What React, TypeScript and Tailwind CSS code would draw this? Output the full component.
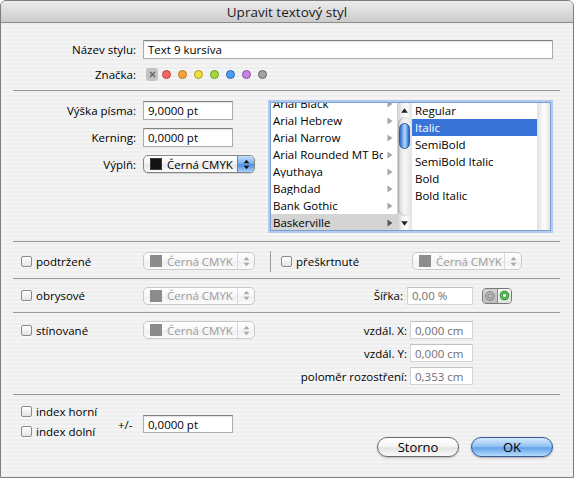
import React from "react";

const Sep = () => <div className="h-px bg-[#9a9a9a]" />;

function Check({ label }: { label: string }) {
  return (
    <div className="flex items-center">
      <div className="w-[11px] h-[11px] shrink-0 rounded-[2px] border border-[#8a8a8a] bg-[linear-gradient(180deg,#ffffff,#e4e4e4)] shadow-[0_1px_0_rgba(255,255,255,0.8)]" />
      <span className="ml-[4px] text-[11.5px] leading-[13px] whitespace-nowrap">{label}</span>
    </div>
  );
}

function Field({ value, className, disabled }: { value: string; className: string; disabled?: boolean }) {
  return (
    <div
      className={
        "flex items-center bg-white border pl-[4px] text-[11.5px] leading-[13px] whitespace-nowrap overflow-hidden " +
        (disabled
          ? "border-[#d4d4d4] border-t-[#c2c2c2] text-[#6f6f6f] "
          : "border-[#ababab] border-t-[#828282] text-black shadow-[inset_0_1px_1px_rgba(0,0,0,0.12)] ") +
        className
      }
    >
      {value}
    </div>
  );
}

function UpDown({ color }: { color: string }) {
  return (
    <svg width="7" height="11" viewBox="0 0 7 11">
      <path d="M3.5 0.8 L6.3 4.2 H0.7Z" fill={color} />
      <path d="M0.7 6.8 H6.3 L3.5 10.2Z" fill={color} />
    </svg>
  );
}

function PopupOn() {
  return (
    <div className="flex h-[18px] w-[112px] rounded-[5px] border border-[#858585] overflow-hidden bg-[linear-gradient(180deg,#ffffff_0%,#f3f3f3_50%,#e6e6e6_55%,#fbfbfb_100%)] shadow-[0_1px_1px_rgba(0,0,0,0.15)]">
      <div className="flex flex-1 items-center pl-[6px] overflow-hidden">
        <div className="w-[12px] h-[12px] shrink-0 bg-[#141414] border border-[#3a3a3a]" />
        <span className="ml-[5px] text-[11.5px] leading-[13px] whitespace-nowrap">Černá CMYK</span>
      </div>
      <div className="w-[17px] shrink-0 flex items-center justify-center border-l border-[#5b86c6] bg-[linear-gradient(180deg,#c6defa_0%,#7fb2f0_45%,#4d8fe4_55%,#a8d0fb_100%)]">
        <UpDown color="#111" />
      </div>
    </div>
  );
}

function PopupOff({ className }: { className: string }) {
  return (
    <div className={"flex h-[18px] rounded-[5px] border border-[#c9c9c9] overflow-hidden bg-[linear-gradient(180deg,#ffffff_0%,#f7f7f7_50%,#efefef_55%,#fcfcfc_100%)] " + className}>
      <div className="flex flex-1 items-center pl-[6px] overflow-hidden">
        <div className="w-[12px] h-[12px] shrink-0 bg-[#8c8c8c]" />
        <span className="ml-[5px] text-[11.5px] leading-[13px] whitespace-nowrap text-[#9c9c9c]">Černá CMYK</span>
      </div>
      <div className="w-[17px] shrink-0 flex items-center justify-center border-l border-[#dadada]">
        <UpDown color="#a8a8a8" />
      </div>
    </div>
  );
}

function Arrow({ dark }: { dark?: boolean }) {
  return (
    <svg width="6" height="8" viewBox="0 0 6 8">
      <path d="M0.5 0.5 L5.5 4 L0.5 7.5Z" fill={dark ? "#555555" : "#a6a6a6"} />
    </svg>
  );
}

const families = [
  "Arial Black",
  "Arial Hebrew",
  "Arial Narrow",
  "Arial Rounded MT Bold",
  "Ayuthaya",
  "Baghdad",
  "Bank Gothic",
  "Baskerville",
];
const styles = ["Regular", "Italic", "SemiBold", "SemiBold Italic", "Bold", "Bold Italic"];

const dots = [
  ["bg-[#f4665f]", "border-[#b8443e]"],
  ["bg-[#f7a53a]", "border-[#b87a22]"],
  ["bg-[#eedf3c]", "border-[#a89a1e]"],
  ["bg-[#a5d63c]", "border-[#6d9e20]"],
  ["bg-[#4c9cf4]", "border-[#2b66bc]"],
  ["bg-[#c585e4]", "border-[#8852a6]"],
  ["bg-[#a3a3a3]", "border-[#666666]"],
];

function FontBrowser() {
  return (
    <div className="mt-[11px] flex h-[129px] w-[281px] border border-[#7c9fd3] shadow-[0_0_0_2px_#b0cbef]">
      <div className="w-[126px] overflow-hidden bg-white">
        <div className="mt-[-8px]">
          {families.map((f, i) => (
            <div
              key={f}
              className={"flex h-[17px] items-center " + (i === 7 ? "bg-[#d4d4d4]" : "")}
            >
              <span className="w-[112px] pl-[2px] overflow-hidden whitespace-nowrap text-[11.5px] leading-[13px]">{f}</span>
              <span className="ml-[4px] flex items-center">
                <Arrow dark={i === 7} />
              </span>
            </div>
          ))}
        </div>
      </div>
      <div className="w-[15px] flex flex-col bg-[linear-gradient(90deg,#cdcdcd,#f2f2f2_35%,#fdfdfd_60%,#e2e2e2)]">
        <div className="h-[14px] flex items-center justify-center">
          <svg width="7" height="5" viewBox="0 0 7 5">
            <path d="M3.5 0.3 L6.8 4.7 H0.2Z" fill="#222" />
          </svg>
        </div>
        <div className="flex-1 mx-[1px] rounded-full shadow-[inset_1px_0_2px_rgba(0,0,0,0.25)] bg-[linear-gradient(90deg,#d8d8d8,#f6f6f6_50%,#e6e6e6)]">
          <div className="mt-[6px] ml-[1px] w-[11px] h-[26px] rounded-full border border-[#2a5aa8] bg-[linear-gradient(90deg,#2f66c6,#7fb4f2_35%,#b9dafb_55%,#4f8ce0_85%,#3067c4)]" />
        </div>
        <div className="h-[14px] flex items-center justify-center">
          <svg width="7" height="5" viewBox="0 0 7 5">
            <path d="M0.2 0.3 H6.8 L3.5 4.7Z" fill="#222" />
          </svg>
        </div>
      </div>
      <div className="w-[125px] overflow-hidden bg-white">
        <div className="mt-[-1px]">
          {styles.map((s, i) => (
            <div
              key={s}
              className={
                "flex h-[17px] items-center pl-[3px] text-[11.5px] leading-[13px] whitespace-nowrap " +
                (i === 1 ? "bg-[#3874d8] text-white" : "text-black")
              }
            >
              {s}
            </div>
          ))}
        </div>
      </div>
      <div className="w-[13px] bg-[linear-gradient(90deg,#dedede,#f7f7f7_40%,#fdfdfd_60%,#e4e4e4)]" />
    </div>
  );
}

export default function App() {
  return (
    <div className="w-[574px] h-[478px] flex flex-col border border-[#7d7d7d] rounded-t-[6px] overflow-hidden font-['Open_Sans',sans-serif] text-black">
      {/* Title bar */}
      <div className="h-[22px] shrink-0 flex items-center justify-center border-b border-[#8c8c8c] bg-[linear-gradient(180deg,#ececec_0%,#dcdcdc_50%,#cbcbcb_100%)]">
        <span className="text-[13.5px] leading-[16px] text-[#1c1c1c]">Upravit textový styl</span>
      </div>

      {/* Body */}
      <div className="flex-1 flex flex-col pl-[12px] pr-[13px] bg-[repeating-linear-gradient(180deg,#eeeeee_0px,#eeeeee_2px,#f4f4f4_2px,#f4f4f4_4px)]">
        {/* Section A */}
        <div className="h-[67px] flex flex-col pt-[17px]">
          <div className="flex items-center h-[19px]">
            <span className="w-[123px] text-right text-[11.5px] leading-[13px]">Název stylu:</span>
            <Field value="Text 9 kursíva" className="ml-[7px] w-[410px] h-[19px]" />
          </div>
          <div className="mt-[8px] flex items-center h-[14px]">
            <span className="w-[123px] text-right text-[11.5px] leading-[13px]">Značka:</span>
            <div className="ml-[10px] w-[12px] h-[13px] rounded-[3px] bg-[#c3c3c3] flex items-center justify-center">
              <svg width="7" height="7" viewBox="0 0 7 7">
                <path d="M1 1 L6 6 M6 1 L1 6" stroke="#666" strokeWidth="1.6" />
              </svg>
            </div>
            <div className="ml-[4px] flex items-center gap-[7px]">
              {dots.map(([bg, bd], i) => (
                <div key={i} className={"w-[9px] h-[9px] rounded-full border " + bg + " " + bd} />
              ))}
            </div>
          </div>
        </div>
        <Sep />

        {/* Section B */}
        <div className="h-[150px] flex">
          <div className="w-[257px] flex flex-col pt-[10px]">
            <div className="flex items-center h-[19px]">
              <span className="w-[123px] text-right text-[11.5px] leading-[13px]">Výška písma:</span>
              <Field value="9,0000 pt" className="ml-[7px] w-[90px] h-[19px]" />
            </div>
            <div className="mt-[8px] flex items-center h-[19px]">
              <span className="w-[123px] text-right text-[11.5px] leading-[13px]">Kerning:</span>
              <Field value="0,0000 pt" className="ml-[7px] w-[90px] h-[19px]" />
            </div>
            <div className="mt-[8px] flex items-center h-[18px]">
              <span className="w-[123px] text-right text-[11.5px] leading-[13px]">Výplň:</span>
              <div className="ml-[7px]">
                <PopupOn />
              </div>
            </div>
          </div>
          <FontBrowser />
        </div>
        <Sep />

        {/* Section C */}
        <div className="h-[36px] flex items-center pt-[2px]">
          <div className="pl-[8px] w-[130px]">
            <Check label="podtržené" />
          </div>
          <PopupOff className="w-[112px]" />
          <div className="ml-[15px] w-px h-[21px] bg-[#9a9a9a]" />
          <div className="ml-[10px] w-[131px]">
            <Check label="přeškrtnuté" />
          </div>
          <PopupOff className="w-[110px]" />
        </div>
        <Sep />

        {/* Section D */}
        <div className="h-[33px] flex items-center">
          <div className="pl-[8px] w-[130px]">
            <Check label="obrysové" />
          </div>
          <PopupOff className="w-[112px]" />
          <span className="w-[148px] text-right text-[11.5px] leading-[13px]">Šířka:</span>
          <Field value="0,00 %" disabled className="ml-[4px] w-[66px] h-[18px]" />
          <div className="ml-[9px] flex w-[30px] h-[16px] rounded-[4px] border border-[#777] overflow-hidden">
            <div className="flex-1 flex items-center justify-center bg-[linear-gradient(180deg,#d2d2d2,#bdbdbd)] border-r border-[#8a8a8a]">
              <svg width="10" height="10" viewBox="0 0 10 10">
                <circle cx="5" cy="5" r="4.3" fill="none" stroke="#6e6e6e" strokeWidth="0.9" />
                <circle cx="5" cy="5" r="2.2" fill="none" stroke="#6e6e6e" strokeWidth="0.9" />
              </svg>
            </div>
            <div className="flex-1 flex items-center justify-center bg-[linear-gradient(180deg,#f6f6f6,#e2e2e2)]">
              <svg width="11" height="11" viewBox="0 0 11 11">
                <circle cx="5.5" cy="5.5" r="4.8" fill="#2f7a2f" />
                <circle cx="5.5" cy="5.5" r="4.1" fill="#52c852" />
                <circle cx="5.5" cy="5.5" r="2.3" fill="#2f7a2f" />
                <circle cx="5.5" cy="5.5" r="1.7" fill="#f2f2f2" />
              </svg>
            </div>
          </div>
        </div>
        <Sep />

        {/* Section E */}
        <div className="h-[81px] flex items-start pt-[8px]">
          <div className="pl-[8px] w-[130px] h-[18px] flex items-center">
            <Check label="stínované" />
          </div>
          <PopupOff className="w-[112px]" />
          <div className="flex flex-col gap-[5px]">
            <div className="flex items-center h-[18px]">
              <span className="w-[152px] text-right text-[11.5px] leading-[13px]">vzdál. X:</span>
              <Field value="0,000 cm" disabled className="ml-[3px] w-[63px] h-[18px]" />
            </div>
            <div className="flex items-center h-[18px]">
              <span className="w-[152px] text-right text-[11.5px] leading-[13px]">vzdál. Y:</span>
              <Field value="0,000 cm" disabled className="ml-[3px] w-[63px] h-[18px]" />
            </div>
            <div className="flex items-center h-[18px]">
              <span className="w-[152px] text-right text-[11.5px] leading-[13px] whitespace-nowrap">poloměr rozostření:</span>
              <Field value="0,353 cm" disabled className="ml-[3px] w-[63px] h-[18px]" />
            </div>
          </div>
        </div>
        <Sep />

        {/* Section F */}
        <div className="flex-1 flex items-start pl-[8px]">
          <div className="w-[97px] pt-[10px] flex flex-col gap-[8px]">
            <div className="h-[12px] flex items-center">
              <Check label="index horní" />
            </div>
            <div className="h-[12px] flex items-center">
              <Check label="index dolní" />
            </div>
          </div>
          <div className="mt-[20px] flex items-center h-[18px]">
            <span className="w-[25px] text-[11.5px] leading-[13px]">+/-</span>
            <Field value="0,0000 pt" className="w-[90px] h-[18px]" />
          </div>
          <div className="flex-1" />
          <div className="mt-[42px] mr-[7px] flex gap-[12px]">
            <button className="w-[82px] h-[20px] rounded-full border border-[#6c6c6c] text-[13px] leading-[16px] text-black bg-[linear-gradient(180deg,#ffffff_0%,#f5f5f5_45%,#e3e3e3_55%,#fbfbfb_100%)] shadow-[0_1px_2px_rgba(0,0,0,0.25)]">
              Storno
            </button>
            <button className="w-[82px] h-[20px] rounded-full border border-[#34589b] text-[13px] leading-[16px] text-black bg-[linear-gradient(180deg,#d6e9fc_0%,#94c4f4_45%,#64a3ea_55%,#b5dcff_100%)] shadow-[0_1px_2px_rgba(0,0,0,0.3)]">
              OK
            </button>
          </div>
        </div>
      </div>
    </div>
  );
}
